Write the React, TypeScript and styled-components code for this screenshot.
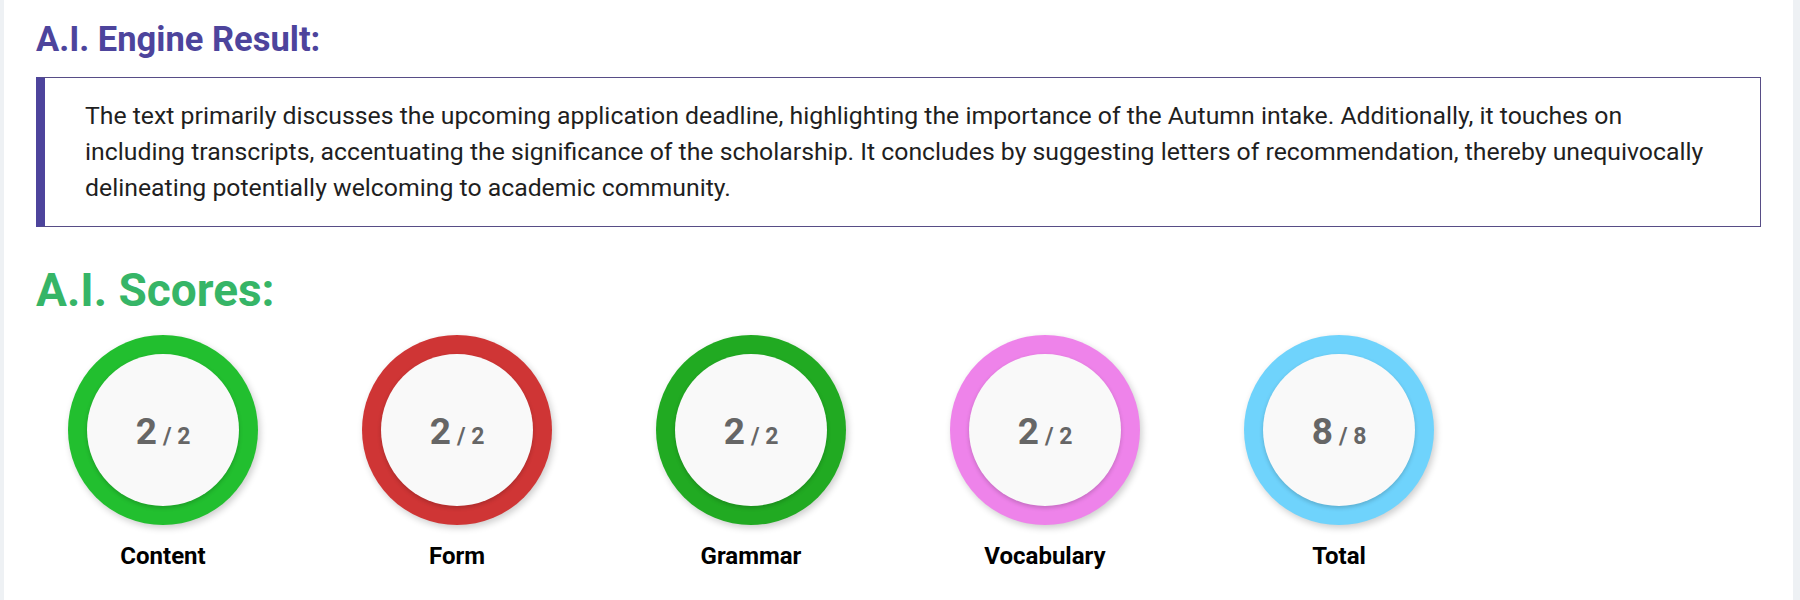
import styled, { createGlobalStyle } from "styled-components";

const GlobalStyle = createGlobalStyle`
    html, body {
        margin: 0;
        padding: 0;
        background: #eef1f4;
    }

    body {
        font-family: Roboto, "Liberation Sans", sans-serif;
    }
`

type Score = {
    label: string;
    value: number;
    max: number;
    color: string;
};

const scores: Score[] = [
    {label: "Content", value: 2, max: 2, color: "#22bf2f"},
    {label: "Form", value: 2, max: 2, color: "#cf3535"},
    {label: "Grammar", value: 2, max: 2, color: "#21aa22"},
    {label: "Vocabulary", value: 2, max: 2, color: "#ee83ea"},
    {label: "Total", value: 8, max: 8, color: "#6fd3fc"},
];

const summary = [
    "The text primarily discusses the upcoming application deadline, highlighting the importance of the Autumn intake. Additionally, it touches on",
    "including transcripts, accentuating the significance of the scholarship. It concludes by suggesting letters of recommendation, thereby unequivocally",
    "delineating potentially welcoming to academic community.",
];

export default function App() {
    return (
        <>
            <GlobalStyle/>
            <Panel>
                <ResultTitle>A.I. Engine Result:</ResultTitle>
                <ResultBox>
                    {summary.map((line) => (
                        <SummaryLine key={line}>{line}</SummaryLine>
                    ))}
                </ResultBox>

                <ScoresTitle>A.I. Scores:</ScoresTitle>
                <ScoreRow>
                    {scores.map((s) => (
                        <ScoreItem key={s.label}>
                            <Ring color={s.color}>
                                <Inner>
                                    <Value>{s.value}</Value>
                                    <Max>/ {s.max}</Max>
                                </Inner>
                            </Ring>
                            <Label>{s.label}</Label>
                        </ScoreItem>
                    ))}
                </ScoreRow>
            </Panel>
        </>
    );
}

const Panel = styled.main`
    margin: 0 7px 0 4px;
    min-height: 100vh;
    box-sizing: border-box;
    padding: 20px 32px;
    background: #ffffff;
`

const ResultTitle = styled.h2`
    margin: 0 0 19px;
    font-size: 34.5px;
    line-height: 38px;
    font-weight: 700;
    color: #4d449c;
`

const ResultBox = styled.div`
    border: 1px solid #574d86;
    border-left: 9px solid #4d449c;
    padding: 20px 40px;
    font-size: 24.8px;
    line-height: 36px;
    color: #1f1f1f;
`

const SummaryLine = styled.div`
    white-space: nowrap;
`

const ScoresTitle = styled.h2`
    margin: 36px 0 18px;
    font-size: 46px;
    line-height: 54px;
    font-weight: 700;
    color: #36b567;
`

const ScoreRow = styled.div`
    display: flex;
    gap: 104px;
    padding-left: 32px;
`

const ScoreItem = styled.div`
    display: flex;
    flex-direction: column;
    align-items: center;
    width: 190px;
`

const Ring = styled.div<{ color: string }>`
    width: 190px;
    height: 190px;
    border-radius: 50%;
    background: ${(p) => p.color};
    display: flex;
    align-items: center;
    justify-content: center;
    box-shadow: 2px 3px 7px rgba(0, 0, 0, 0.2);
`

const Inner = styled.div`
    width: 152px;
    height: 152px;
    border-radius: 50%;
    background: #f9f9f9;
    display: flex;
    align-items: baseline;
    justify-content: center;
    padding-top: 2px;
    box-sizing: border-box;
    line-height: 152px;
    box-shadow: 0 2px 4px rgba(0, 0, 0, 0.18);
    color: #666666;
`

const Value = styled.span`
    font-size: 37px;
    font-weight: 700;
`

const Max = styled.span`
    margin-left: 6px;
    font-size: 23px;
    font-weight: 700;
`

const Label = styled.div`
    margin-top: 17px;
    font-size: 24px;
    line-height: 28px;
    font-weight: 700;
    color: #000000;
`
